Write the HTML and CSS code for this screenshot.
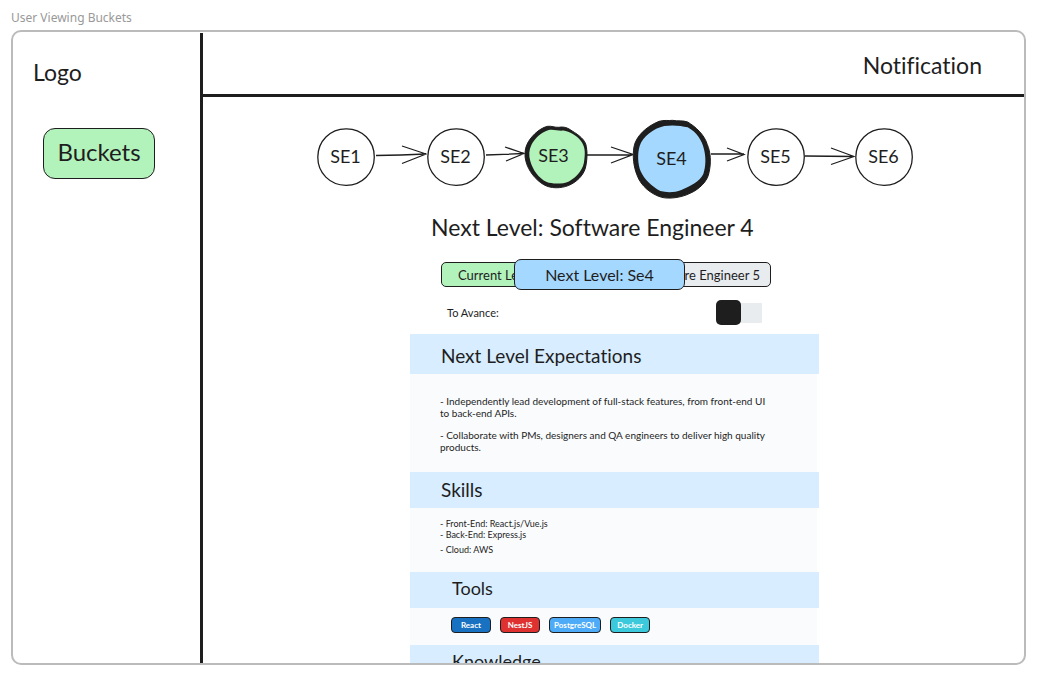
FILE: index.html
```html
<!DOCTYPE html>
<html lang="en">
<head>
<meta charset="utf-8">
<meta name="viewport" content="width=device-width, initial-scale=1">
<title>User Viewing Buckets</title>
<link rel="stylesheet" href="styles.css">
</head>
<body>
<p class="frame-name">User Viewing Buckets</p>
<div class="frame">
  <aside class="sidebar">
    <div class="logo">Logo</div>
    <nav><button class="bucket-button" type="button">Buckets</button></nav>
  </aside>
  <div class="content">
    <header class="topbar"><a class="notification" href="#notification">Notification</a></header>
    <main class="main">
      <div class="levels">
        <div class="level">
          <svg class="ring" viewBox="0 0 58 58"><path d="M29 .8C45 .5 57.4 13 57.3 29S45 57.4 29 57.3 .7 45 .8 29 13 .9 29 .8Z"/></svg>
          <span>SE1</span>
        </div>
        <svg class="arrow" width="52" height="24" viewBox="0 0 52 24"><path d="M1 10.500Q26 10 51 9M27 1L51 9L27 18.500"/></svg>
        <div class="level">
          <svg class="ring" viewBox="0 0 58 58"><path d="M29 .8C45 .5 57.4 13 57.3 29S45 57.4 29 57.3 .7 45 .8 29 13 .9 29 .8Z"/></svg>
          <span>SE2</span>
        </div>
        <svg class="arrow" width="40" height="24" viewBox="0 0 40 24"><path d="M1 10L39 8.500M20 2L39 8.500L21 16"/></svg>
        <div class="level level-current">
          <svg class="ring" viewBox="0 0 188 188"><path class="ink" d="M68 1C80-1 90 5 103 4C119 1 130 6 143 15C164 28 183 42 186 62C190 82 188 110 183 128C176 151 156 170 133 180C109 190 77 190 57 178C32 164 10 135 3 108C-2 91-1 70 6 56C15 35 42 7 68 1Z"/><path class="green" d="M72 12C88 9 101 16 116 14C135 17 157 29 169 45C182 61 183 80 180 101C179 130 158 155 133 168C114 177 81 176 66 170C41 158 23 132 16 106C11 88 12 72 20 56C31 36 50 18 72 12Z"/></svg>
          <span>SE3</span>
        </div>
        <svg class="arrow" width="46" height="24" viewBox="0 0 46 24"><path d="M0 10H45M24 2L46 9.500L24 18"/></svg>
        <div class="level level-next">
          <svg class="ring" viewBox="0 0 234 236"><path class="ink" d="M78 4C95-1 105 3 118 1C134 4 151 1 164 6C187 20 214 43 223 74C233 96 235 128 228 158C224 183 199 208 171 220C147 232 111 238 86 232C55 223 23 198 12 165C2 141-2 108 3 80C9 49 39 20 78 4Z"/><path class="blue" d="M94 18C119 14 145 17 164 22C190 36 207 60 213 88C219 112 219 139 211 162C200 185 171 199 145 210C125 218 101 218 82 213C56 200 33 177 23 154C14 132 13 100 20 78C29 50 61 25 94 18Z"/></svg>
          <span>SE4</span>
        </div>
        <svg class="arrow" width="36" height="24" viewBox="0 0 36 24"><path d="M0 9H33M16 3L33 9.500L16 16"/></svg>
        <div class="level">
          <svg class="ring" viewBox="0 0 58 58"><path d="M29 .8C45 .5 57.4 13 57.3 29S45 57.4 29 57.3 .7 45 .8 29 13 .9 29 .8Z"/></svg>
          <span>SE5</span>
        </div>
        <svg class="arrow" width="50" height="24" viewBox="0 0 50 24"><path d="M0 11L49 11.500M26 3L49 11.500L26 19.500"/></svg>
        <div class="level">
          <svg class="ring" viewBox="0 0 58 58"><path d="M29 .8C45 .5 57.4 13 57.3 29S45 57.4 29 57.3 .7 45 .8 29 13 .9 29 .8Z"/></svg>
          <span>SE6</span>
        </div>
      </div>

      <div class="details">
        <h1 class="title">Next Level: Software Engineer 4</h1>

        <div class="tabs">
          <button class="tab tab-current" type="button">Current Level</button>
          <button class="tab tab-next" type="button">Next Level: Se4</button>
          <button class="tab tab-later" type="button">Software Engineer 5</button>
        </div>

        <div class="advance">
          <label for="advance">To Avance:</label>
          <input class="toggle" id="advance" type="checkbox">
        </div>

        <section>
          <h2 class="section-title section-title-tall">Next Level Expectations</h2>
          <div class="section-body expectations">
            <p>- Independently lead development of full-stack features, from front-end UI<br>to back-end APIs.</p>
            <p>- Collaborate with PMs, designers and QA engineers to deliver high quality<br>products.</p>
          </div>
        </section>
        <section>
          <h2 class="section-title">Skills</h2>
          <div class="section-body skills">
            <p>- Front-End: React.js/Vue.js<br>- Back-End: Express.js</p>
            <p>- Cloud: AWS</p>
          </div>
        </section>
        <section>
          <h2 class="section-title section-title-inset">Tools</h2>
          <div class="section-body tools">
            <span class="tool react">React</span>
            <span class="tool nest">NestJS</span>
            <span class="tool postgres">PostgreSQL</span>
            <span class="tool docker">Docker</span>
          </div>
        </section>
        <section>
          <h2 class="section-title section-title-inset">Knowledge</h2>
        </section>
      </div>
    </main>
  </div>
</div>
</body>
</html>
```
FILE: styles.css
```css
* { box-sizing: border-box; }

body {
  display: flex;
  flex-direction: column;
  height: 100vh;
  margin: 0;
  padding: 8px 11px 11px;
  background: #fff;
  color: #1e1e1e;
  font-family: Excalifont, Lato, sans-serif;
  font-variant-ligatures: none;
}

h1, h2, p { margin: 0; font-weight: 400; }

button {
  padding: 0;
  color: inherit;
  font-family: inherit;
  border: 1px solid #1e1e1e;
}

.frame-name {
  color: #999;
  font: 12px/20px "Noto Sans", sans-serif;
}

.frame {
  display: flex;
  flex: 1;
  min-height: 0;
  margin-top: 2px;
  overflow: hidden;
  border: 2px solid #bbb;
  border-radius: 10px;
}

.sidebar {
  flex: none;
  width: 190px;
  margin-top: 1px;
  padding: 25px 30px 0 20px;
  border-right: 3px solid #1e1e1e;
}

.logo { font-size: 23px; line-height: 28px; }

.bucket-button {
  width: 112px;
  height: 51px;
  margin: 42px 0 0 10px;
  padding-bottom: 5px;
  background: #b2f2bb;
  border-radius: 12px;
  font-size: 24px;
}

.content { flex: 1; min-width: 0; }

.topbar {
  display: flex;
  align-items: center;
  justify-content: flex-end;
  height: 65px;
  padding: 4px 42px 0 0;
  border-bottom: 3px solid #1e1e1e;
}

.notification {
  color: inherit;
  font-size: 23px;
  line-height: 28px;
  text-decoration: none;
}

.main {
  display: flex;
  flex-direction: column;
  align-items: center;
  padding: 20px 0 0 2px;
}

.levels { display: flex; align-items: center; }

.level {
  display: grid;
  place-items: center;
  width: 58px;
  height: 58px;
  font-size: 18px;
}

.level > * { grid-area: 1 / 1; }
.level > span { padding-bottom: 2px; }
.level-current { width: 62px; height: 62px; }
.level-current > span { padding: 0 4px 4px 0; }
.level-next { width: 78px; height: 77px; margin-top: 3px; }

.ring { width: 100%; height: 100%; overflow: visible; fill: none; stroke: #1e1e1e; stroke-width: 1.3; }
.ring .ink { fill: #1e1e1e; stroke-width: 3; }
.ring .green { fill: #b2f2bb; stroke: none; }
.ring .blue { fill: #a5d8ff; stroke: none; }
.arrow { flex: none; fill: none; stroke: #1e1e1e; stroke-width: 1.3; }

.details { width: 100%; max-width: 409px; }

.title {
  margin-top: 16px;
  padding-left: 21px;
  font-size: 23px;
  line-height: 28px;
  white-space: nowrap;
}

.tabs {
  display: flex;
  align-items: center;
  margin-top: 18px;
  padding: 0 48px 0 31px;
}

.tab {
  height: 25px;
  border-radius: 5px;
  font-size: 13px;
  line-height: 20px;
  white-space: nowrap;
}

.tab-current { width: 80px; padding-left: 16px; overflow: hidden; background: #b2f2bb; text-align: left; }
.tab-next { z-index: 1; width: 171px; height: 31px; margin: 0 -7px; background: #a5d8ff; border-radius: 7px; font-size: 16px; }
.tab-later { display: flex; justify-content: flex-end; align-items: center; width: 93px; padding-right: 10px; overflow: hidden; background: #e9ecef; }

.advance {
  display: flex;
  align-items: center;
  justify-content: space-between;
  margin: 10px 0 9px;
  padding: 0 57px 0 37px;
  font-size: 11px;
}

.toggle {
  appearance: none;
  width: 46px;
  height: 25px;
  margin: 0;
  background: linear-gradient(#e9ecef, #e9ecef) center / 100% 20px no-repeat;
  border-radius: 4px;
}

.toggle::before {
  display: block;
  width: 25px;
  height: 25px;
  background: #1e1e1e;
  border-radius: 5px;
  content: "";
}

.toggle:checked::before { margin-left: auto; }

.section-title {
  height: 36px;
  padding-left: 31px;
  background: #d8edff;
  font-size: 19px;
  line-height: 36px;
}

.section-title-tall { height: 40px; line-height: 44px; }
.section-title-inset { padding-left: 42px; font-size: 18px; line-height: 32px; }

.section-body { margin-right: 2px; background: #fafbfd; }
.expectations { padding: 21px 30px 19px; font-size: 10px; line-height: 12px; white-space: nowrap; }
.expectations p + p { margin-top: 10px; }
.skills { padding: 10px 30px 17px; font-size: 9px; line-height: 11px; }
.skills p + p { margin-top: 4px; }
.tools { display: flex; gap: 9px; padding: 9px 41px 12px; }

.tool {
  min-width: 40px;
  height: 16px;
  padding: 0 4px;
  border: 1px solid #1e1e1e;
  border-radius: 4px;
  color: #fff;
  font-size: 8px;
  font-weight: 700;
  line-height: 15px;
  text-align: center;
}

.react { background: #1971c2; }
.nest { background: #e03131; }
.postgres { background: #4dabf7; }
.docker { background: #3bc9db; }
```
